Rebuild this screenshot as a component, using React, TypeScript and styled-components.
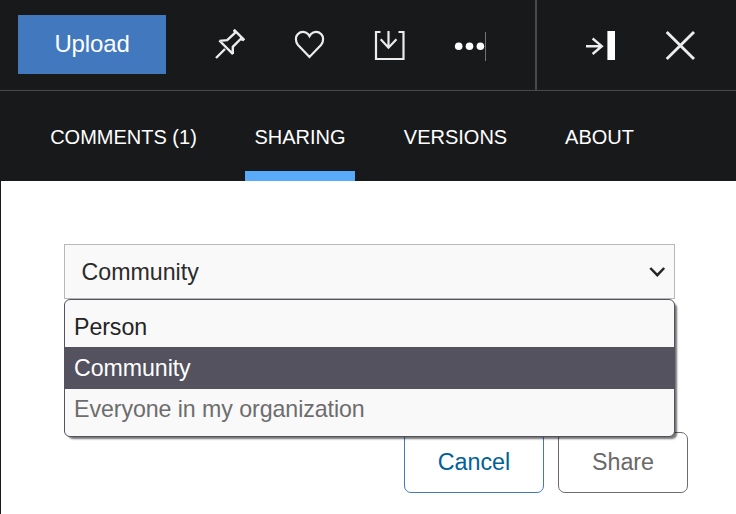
import React from "react";
import styled, { createGlobalStyle } from "styled-components";

const GlobalStyle = createGlobalStyle`
  * { box-sizing: border-box; }
  body {
    margin: 0;
    background: #fff;
    font-family: "Liberation Sans", Arial, sans-serif;
    overflow: hidden;
  }
  button { font-family: inherit; margin: 0; padding: 0; cursor: pointer; }
`;

const Page = styled.div`
  display: flex;
  flex-direction: column;
  width: 736px;
  height: 514px;
  overflow: hidden;
`;

const Toolbar = styled.header`
  display: flex;
  flex: none;
  height: 91px;
  background: #18191b;
  border-bottom: 1px solid #49494c;
`;

const Actions = styled.div`
  display: flex;
  align-items: flex-start;
  width: 537px;
  padding: 15px 0 0 18px;
  border-right: 2px solid #49494c;
`;

const WindowActions = styled.div`
  display: flex;
  padding: 15px 0 0 23px;
`;

const UploadButton = styled.button`
  width: 148px;
  height: 59px;
  margin-right: 24px;
  padding-bottom: 1px;
  border: 0;
  background: #4178be;
  color: #fff;
  font-size: 24px;
  letter-spacing: -0.15px;
`;

const IconButton = styled.button`
  display: flex;
  align-items: center;
  justify-content: center;
  width: 80px;
  height: 60px;
  border: 0;
  background: transparent;
  color: #ececec;

  svg { display: block; width: 40px; height: 40px; fill: none; stroke: currentColor; }
`;

const Panel = styled.main`
  flex: 1;
  border-left: 1px solid #18191b;
`;

const Tabs = styled.nav`
  display: flex;
  gap: 38px;
  height: 90px;
  padding-left: 39px;
  background: #18191b;
`;

const Tab = styled.button<{ $width: number; $active?: boolean }>`
  width: ${(p) => p.$width}px;
  height: 90px;
  padding-top: 12px;
  border: 0;
  border-bottom: 10px solid ${(p) => (p.$active ? "#5aaafa" : "transparent")};
  background: transparent;
  color: #fff;
  font-size: 20px;
  white-space: nowrap;
`;

const ShareForm = styled.section`
  padding: 63px 48px 0 63px;
`;

const SelectField = styled.div`
  position: relative;
  width: 611px;
`;

const SelectBox = styled.button`
  display: flex;
  align-items: center;
  justify-content: space-between;
  width: 611px;
  height: 55px;
  padding: 1px 8px 0 16.5px;
  border: 1px solid #b8b8b8;
  background: #f9f9f9;
  color: #2b2b2b;
  font-size: 23.2px;
`;

const Options = styled.ul`
  position: absolute;
  top: 55px;
  left: 0;
  z-index: 1;
  width: 611px;
  height: 138px;
  margin: 0;
  padding: 7px 0 0;
  list-style: none;
  background: #f9f9f9;
  border: 1px solid #53525e;
  border-radius: 6px;
  box-shadow: 3px 3px 2px -1px rgba(0, 0, 0, 0.55);
`;

const Option = styled.li<{ $selected?: boolean; $muted?: boolean }>`
  height: ${(p) => (p.$selected ? 42 : 40)}px;
  padding-left: 9px;
  font-size: 23.2px;
  letter-spacing: -0.07px;
  line-height: ${(p) => (p.$selected ? 42 : 40)}px;
  color: ${(p) => (p.$selected ? "#fff" : p.$muted ? "#6d6d6d" : "#242424")};
  background: ${(p) => (p.$selected ? "#53525e" : "transparent")};
`;

const Buttons = styled.div`
  display: flex;
  justify-content: flex-end;
  gap: 14px;
  padding-top: 133px;
`;

const FormButton = styled.button<{ $width: number; $border: string; $color: string }>`
  width: ${(p) => p.$width}px;
  height: 61px;
  padding-bottom: 1px;
  border: 1px solid ${(p) => p.$border};
  border-radius: 7px;
  background: #fff;
  color: ${(p) => p.$color};
  font-size: 23.3px;
`;

const PinIcon = () => (
  <svg viewBox="0 0 40 40" strokeWidth="2.4">
    <path d="M6 33 15 24M9.3 15.5 23 29.2M9.5 15.9 17.2 15.2 25 7.9 24.1 4.7M22.8 28.9 22.8 21.8 30.6 14 34 15.1M23.9 4.7 34.4 15.2" />
  </svg>
);

const HeartIcon = () => (
  <svg viewBox="0 0 40 40" strokeWidth="2.2">
    <path d="M19.5 32 8 20C5.3 16.8 5.1 11.7 8 8.9 10.7 6.1 15.4 6.2 18 9L19.5 11.3 21 9C23.6 6.2 28.3 6.1 31 8.9 33.9 11.7 33.7 16.8 31 20Z" />
  </svg>
);

const DownloadIcon = () => (
  <svg viewBox="0 0 40 40" strokeWidth="2.2">
    <path d="M10.5 7H6V34H33.5V7H28.5" />
    <path d="M18.5 6V23.2M10.7 14.3 18.5 22.7 26.5 14.3" />
  </svg>
);

const MoreIcon = () => (
  <svg viewBox="0 0 40 40">
    <g fill="#fff" stroke="none">
      <circle cx="8.7" cy="21.2" r="3.8" />
      <circle cx="19.5" cy="21.2" r="3.8" />
      <circle cx="30.4" cy="21.2" r="3.8" />
    </g>
    <path d="M35.5 7V36" stroke="#737373" />
  </svg>
);

const CollapseIcon = () => (
  <svg viewBox="0 0 40 40" strokeWidth="2.4">
    <path d="M6 21.2H22M12.6 13.5 21.8 21.2 12.6 29" />
    <path d="M31.2 6V35" stroke="#fff" strokeWidth="7.6" />
  </svg>
);

const CloseIcon = () => (
  <svg viewBox="0 0 40 40" strokeWidth="2.9">
    <path d="M6.7 7 34 34M34 7 6.7 34" />
  </svg>
);

const Chevron = () => (
  <svg width="18" height="14" viewBox="0 0 18 14" fill="none">
    <path d="M2.3 3 9.3 10.2 16.2 3" stroke="#242424" strokeWidth="2.5" />
  </svg>
);

export default function App() {
  return (
    <Page>
      <GlobalStyle />
      <Toolbar>
        <Actions>
          <UploadButton>Upload</UploadButton>
          <IconButton aria-label="Pin"><PinIcon /></IconButton>
          <IconButton aria-label="Like"><HeartIcon /></IconButton>
          <IconButton aria-label="Download"><DownloadIcon /></IconButton>
          <IconButton aria-label="More actions"><MoreIcon /></IconButton>
        </Actions>
        <WindowActions>
          <IconButton aria-label="Collapse"><CollapseIcon /></IconButton>
          <IconButton aria-label="Close"><CloseIcon /></IconButton>
        </WindowActions>
      </Toolbar>
      <Panel>
        <Tabs>
          <Tab $width={167}>COMMENTS (1)</Tab>
          <Tab $width={110} $active>SHARING</Tab>
          <Tab $width={125}>VERSIONS</Tab>
          <Tab $width={87}>ABOUT</Tab>
        </Tabs>
        <ShareForm>
          <SelectField>
            <SelectBox aria-haspopup="listbox" aria-expanded="true">
              Community
              <Chevron />
            </SelectBox>
            <Options role="listbox">
              <Option role="option">Person</Option>
              <Option role="option" $selected>Community</Option>
              <Option role="option" $muted>Everyone in my organization</Option>
            </Options>
          </SelectField>
          <Buttons>
            <FormButton $width={140} $border="#4178be" $color="#006199">Cancel</FormButton>
            <FormButton $width={130} $border="#6d6d6d" $color="#696969">Share</FormButton>
          </Buttons>
        </ShareForm>
      </Panel>
    </Page>
  );
}
